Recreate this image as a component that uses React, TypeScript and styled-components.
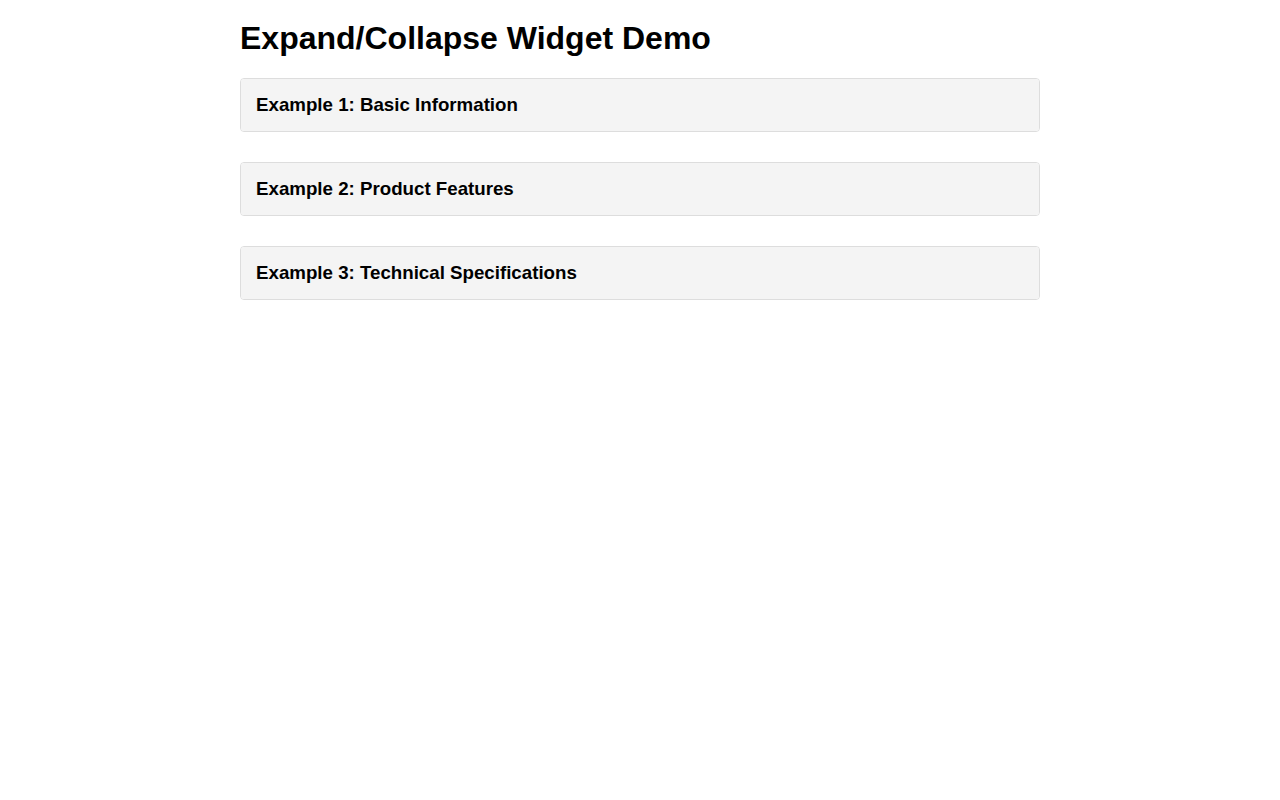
import React, { useState } from "react";
import styled, { createGlobalStyle } from "styled-components";

type TSection = {
    title: string,
    body: string[],
}

const sections: TSection[] = [
    {
        title: "Example 1: Basic Information",
        body: ["This is some basic information that can be expanded or collapsed."],
    },
    {
        title: "Example 2: Product Features",
        body: ["Fast performance", "Easy to use interface", "Works on every device"],
    },
    {
        title: "Example 3: Technical Specifications",
        body: ["Processor: 2.4 GHz", "Memory: 8 GB", "Storage: 256 GB SSD"],
    },
];

const GlobalStyle = createGlobalStyle`
    html, body {
        margin: 0;
        background: #ffffff;
    }

    body {
        padding: 20px;
        font-family: "Liberation Sans", Arial, sans-serif;
        color: #000000;
    }
`;

const Collapsible = ({ section }: { section: TSection }) => {
    const [open, setOpen] = useState(false);

    return (
        <Widget>
            <WidgetHeader onClick={() => setOpen(!open)}>{section.title}</WidgetHeader>
            <WidgetBody open={open}>
                {section.body.map((line) => <p key={line}>{line}</p>)}
            </WidgetBody>
        </Widget>
    );
};

const App = () => (
    <>
        <GlobalStyle />
        <Page>
            <Title>Expand/Collapse Widget Demo</Title>
            {sections.map((section) => <Collapsible key={section.title} section={section} />)}
        </Page>
    </>
);

const Page = styled.main`
    max-width: 800px;
    margin: 0 auto;
`;

const Title = styled.h1`
    font-size: 32px;
    font-weight: bold;
    margin: 0 0 21px;
`;

const Widget = styled.section`
    border: 1px solid #dddddd;
    border-radius: 4px;
    margin-bottom: 30px;
    overflow: hidden;
`;

const WidgetHeader = styled.h3`
    margin: 0;
    padding: 15px;
    background-color: #f4f4f4;
    font-size: 18.72px;
    font-weight: bold;
    cursor: pointer;
    user-select: none;
`;

const WidgetBody = styled.div<{ open: boolean }>`
    display: ${(p) => (p.open ? "block" : "none")};
    padding: 15px;
    border-top: 1px solid #dddddd;
    font-size: 16px;

    p {
        margin: 0 0 8px;
    }
`;

export default App;
